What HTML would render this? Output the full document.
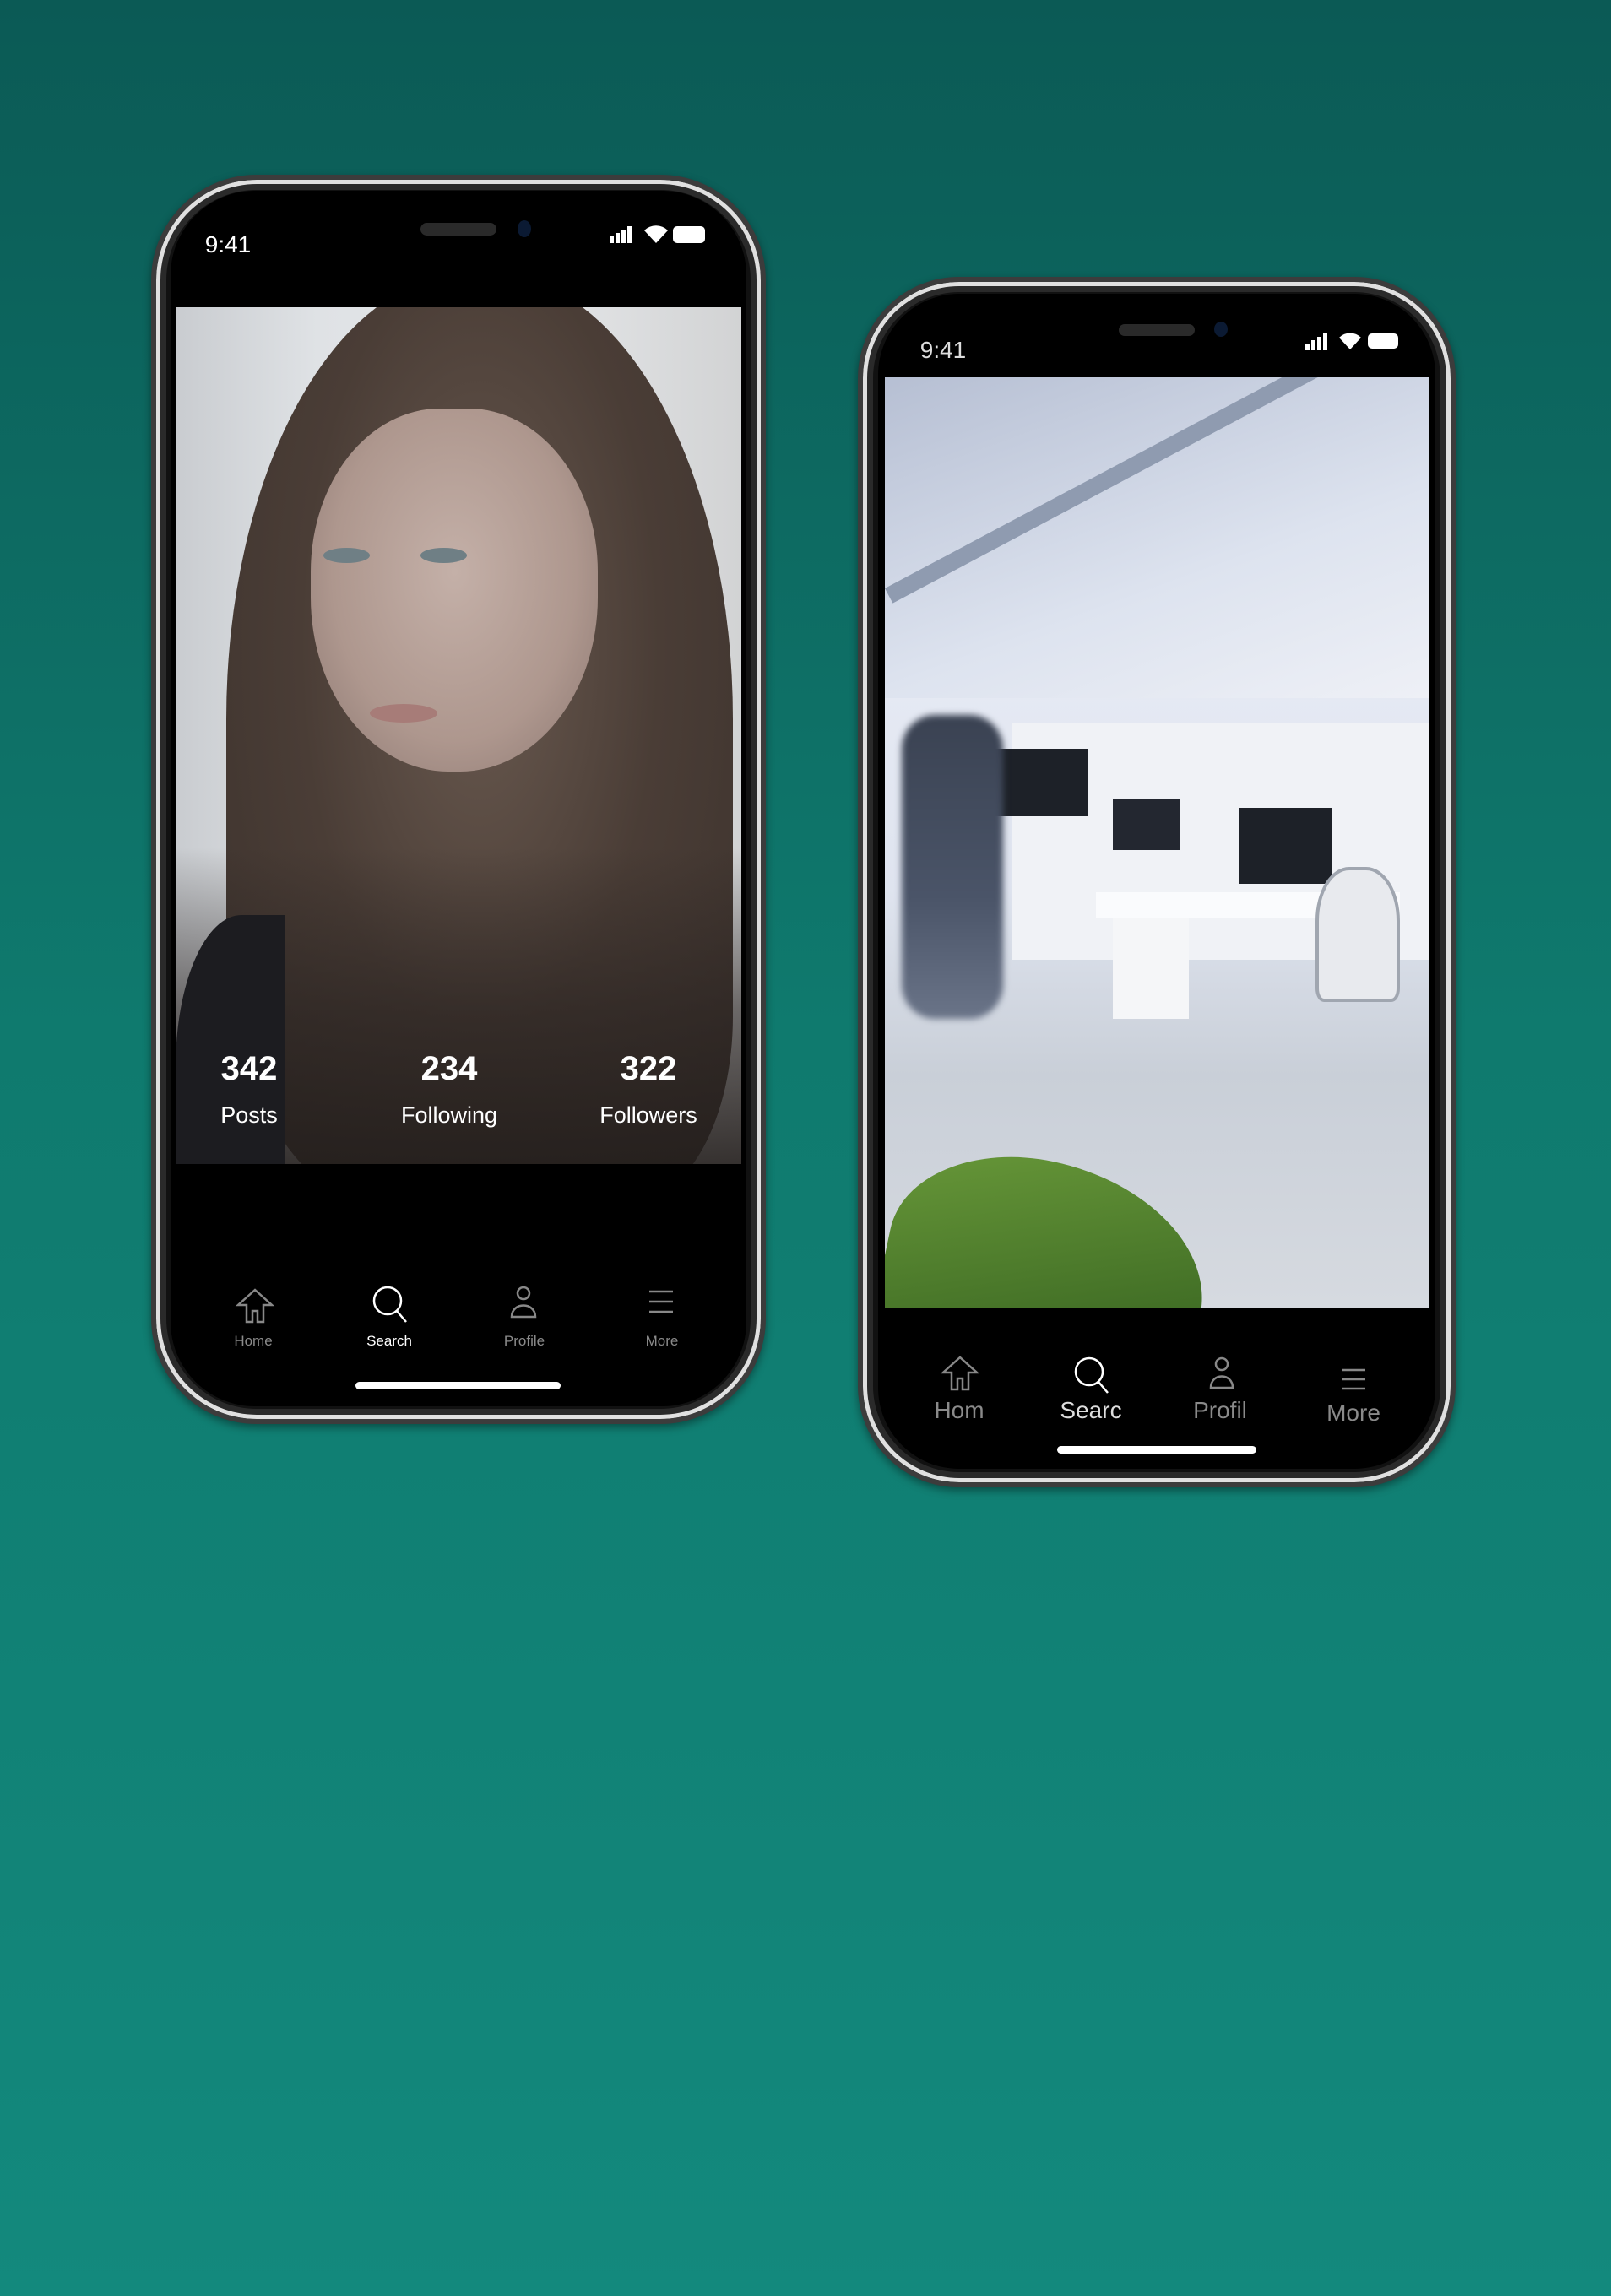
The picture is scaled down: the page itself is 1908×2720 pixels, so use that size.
<!DOCTYPE html>
<html><head><meta charset="utf-8"><style>
*{margin:0;padding:0;box-sizing:border-box}
body{width:1908px;height:2720px;overflow:hidden;background:linear-gradient(180deg,#0b5a55 0%,#0f7a6e 45%,#13897d 100%);font-family:"Liberation Sans",sans-serif;position:relative}
.ph{position:absolute;border-radius:125px;background:#111;border:6px solid #3c3c3c;box-shadow:inset 0 0 0 5px #e0e0e0,inset 0 0 0 12px #2a2a2a,0 4px 10px rgba(0,0,0,.4)}
.scr{position:absolute;background:#000;overflow:hidden}
.abs{position:absolute}
.t{color:#fff;position:absolute;text-align:center;transform:translateX(-50%);white-space:nowrap}
.lab{color:#8a8a8a}
svg{position:absolute;overflow:visible}
</style></head><body>

<!-- Phone 1 -->
<div class="ph" style="left:179px;top:207px;width:728px;height:1480px"></div>
<div class="scr" style="left:202px;top:226px;width:682px;height:1440px;border-radius:100px">
  <div class="abs" style="left:6px;top:138px;width:670px;height:1015px;overflow:hidden;background:linear-gradient(90deg,#c9ccd0 0%,#dfe2e5 25%,#e6e8ea 60%,#d2d3d4 100%)">
    <div class="abs" style="left:60px;top:-40px;width:600px;height:1100px;border-radius:48% 48% 20% 30%;background:radial-gradient(ellipse at 50% 40%,#6a5a50 0%,#4a3d36 50%,#3c322d 100%)"></div>
    <div class="abs" style="left:160px;top:120px;width:340px;height:430px;border-radius:45% 45% 48% 48%;background:radial-gradient(ellipse at 50% 45%,#c4b0a8 0%,#ae978e 60%,#8a7670 100%)"></div>
    <div class="abs" style="left:0px;top:640px;width:670px;height:380px;background:linear-gradient(180deg,rgba(0,0,0,0) 0%,rgba(40,34,32,.6) 50%,rgba(35,30,28,.9) 100%)"></div>
    <div class="abs" style="left:0;top:720px;width:130px;height:300px;background:#1c1c20;border-radius:60% 0 0 0"></div>
    <div class="abs" style="left:175px;top:285px;width:55px;height:18px;border-radius:50%;background:#6f7f85"></div>
    <div class="abs" style="left:290px;top:285px;width:55px;height:18px;border-radius:50%;background:#6f7f85"></div>
    <div class="abs" style="left:230px;top:470px;width:80px;height:22px;border-radius:50%;background:#a77c78"></div>
  </div>
  <div class="t" style="left:68px;top:48px;font-size:28px">9:41</div>
  <div class="abs" style="left:296px;top:38px;width:90px;height:15px;border-radius:8px;background:#2a2a2a"></div>
  <div class="abs" style="left:411px;top:35px;width:16px;height:20px;border-radius:50%;background:#0b1a33"></div>
  <div class="abs" style="left:520px;top:54px;width:5px;height:8px;background:#fff"></div>
  <div class="abs" style="left:527px;top:50px;width:5px;height:12px;background:#fff"></div>
  <div class="abs" style="left:534px;top:46px;width:5px;height:16px;background:#fff"></div>
  <div class="abs" style="left:541px;top:42px;width:5px;height:20px;background:#fff"></div>
  <svg style="left:560px;top:40px" width="30" height="24"><path d="M15 22L1 7A20 20 0 0 1 29 7Z" fill="#fff"/></svg>
  <div class="abs" style="left:595px;top:42px;width:38px;height:20px;border-radius:5px;background:#fff"></div>
  <div class="t" style="left:93px;top:1018px;font-size:40px;font-weight:bold">342</div>
  <div class="t" style="left:93px;top:1080px;font-size:27px">Posts</div>
  <div class="t" style="left:330px;top:1018px;font-size:40px;font-weight:bold">234</div>
  <div class="t" style="left:330px;top:1080px;font-size:27px">Following</div>
  <div class="t" style="left:566px;top:1018px;font-size:40px;font-weight:bold">322</div>
  <div class="t" style="left:566px;top:1080px;font-size:27px">Followers</div>
  <svg style="left:0;top:0" width="682" height="1440" fill="none" stroke-width="2.5">
    <path d="M90 1340v-20l-10 0 20-18 20 18-10 0v20h-7v-13h-6v13z" stroke="#888"/>
    <circle cx="257" cy="1315" r="16" stroke="#fff"/><path d="M268 1327l11 13" stroke="#fff"/>
    <circle cx="418" cy="1306" r="7" stroke="#888"/><path d="M404 1334c0-18 28-18 28 0z" stroke="#888"/>
    <path d="M567 1304h28M567 1316h28M567 1328h28" stroke="#888"/>
  </svg>
  <div class="t lab" style="left:98px;top:1353px;font-size:17px">Home</div>
  <div class="t" style="left:259px;top:1353px;font-size:17px">Search</div>
  <div class="t lab" style="left:419px;top:1353px;font-size:17px">Profile</div>
  <div class="t lab" style="left:582px;top:1353px;font-size:17px">More</div>
  <div class="abs" style="left:219px;top:1411px;width:243px;height:9px;border-radius:5px;background:#fff"></div>
</div>

<!-- Phone 2 -->
<div class="ph" style="left:1016px;top:328px;width:708px;height:1434px;border-radius:120px"></div>
<div class="scr" style="left:1040px;top:348px;width:660px;height:1392px;border-radius:96px">
  <div class="abs" style="left:8px;top:99px;width:645px;height:1102px;overflow:hidden;background:linear-gradient(180deg,#c8d0e0 0%,#e6eaf4 30%,#dfe4ef 55%,#c9cfd8 75%,#d6dae0 100%)">
    <div class="abs" style="left:0;top:0;width:645px;height:380px;background:linear-gradient(160deg,#b6bfd3 0%,#dde3ef 60%,#eef0f6 100%)"></div>
    <div class="abs" style="left:0;top:250px;width:645px;height:20px;background:#8f9bb0;transform:rotate(-28deg);transform-origin:0 0"></div>
    <div class="abs" style="left:150px;top:410px;width:500px;height:280px;background:#f0f2f6"></div>
    <div class="abs" style="left:130px;top:440px;width:110px;height:80px;background:#1d2128"></div>
    <div class="abs" style="left:420px;top:510px;width:110px;height:90px;background:#1d2128"></div>
    <div class="abs" style="left:270px;top:500px;width:80px;height:60px;background:#232730"></div>
    <div class="abs" style="left:250px;top:610px;width:360px;height:30px;background:#fafbfd"></div>
    <div class="abs" style="left:270px;top:640px;width:90px;height:120px;background:#f5f6f8"></div>
    <div class="abs" style="left:510px;top:580px;width:100px;height:160px;border-radius:40% 40% 10% 10%;background:#e8eaee;border:4px solid #a0a6b0"></div>
    <div class="abs" style="left:20px;top:400px;width:120px;height:360px;border-radius:40px;background:linear-gradient(180deg,#3a4252 0%,#4a5468 60%,#6a7488 100%);filter:blur(4px)"></div>
    <div class="abs" style="left:0;top:930px;width:380px;height:260px;border-radius:50% 60% 0 0;background:linear-gradient(160deg,#6a9a3a,#2e5a1c);transform:rotate(12deg)"></div>
  </div>
  <div class="t" style="left:77px;top:51px;font-size:28px;color:#ddd">9:41</div>
  <div class="abs" style="left:285px;top:36px;width:90px;height:14px;border-radius:7px;background:#2a2a2a"></div>
  <div class="abs" style="left:398px;top:33px;width:16px;height:18px;border-radius:50%;background:#0b1a33"></div>
  <div class="abs" style="left:506px;top:59px;width:5px;height:8px;background:#fff"></div>
  <div class="abs" style="left:513px;top:55px;width:5px;height:12px;background:#fff"></div>
  <div class="abs" style="left:520px;top:51px;width:5px;height:16px;background:#fff"></div>
  <div class="abs" style="left:527px;top:47px;width:5px;height:20px;background:#fff"></div>
  <svg style="left:545px;top:45px" width="28" height="22"><path d="M14 21L1 7A18 18 0 0 1 27 7Z" fill="#fff"/></svg>
  <div class="abs" style="left:580px;top:47px;width:36px;height:18px;border-radius:5px;background:#fff"></div>
  <svg style="left:0;top:0" width="660" height="1392" fill="none" stroke-width="2.5">
    <path d="M87 1298v-20l-10 0 20-18 20 18-10 0v20h-7v-13h-6v13z" stroke="#888"/>
    <circle cx="250" cy="1277" r="16" stroke="#fff"/><path d="M261 1289l11 13" stroke="#fff"/>
    <circle cx="407" cy="1268" r="7" stroke="#888"/><path d="M394 1296c0-18 26-18 26 0z" stroke="#888"/>
    <path d="M549 1275h28M549 1286h28M549 1297h28" stroke="#888"/>
  </svg>
  <div class="t lab" style="left:96px;top:1307px;font-size:28px">Hom</div>
  <div class="t" style="left:252px;top:1307px;font-size:28px;color:#ddd">Searc</div>
  <div class="t lab" style="left:405px;top:1307px;font-size:28px">Profil</div>
  <div class="t lab" style="left:563px;top:1310px;font-size:28px">More</div>
  <div class="abs" style="left:212px;top:1365px;width:236px;height:9px;border-radius:5px;background:#fff"></div>
</div>
</body></html>
